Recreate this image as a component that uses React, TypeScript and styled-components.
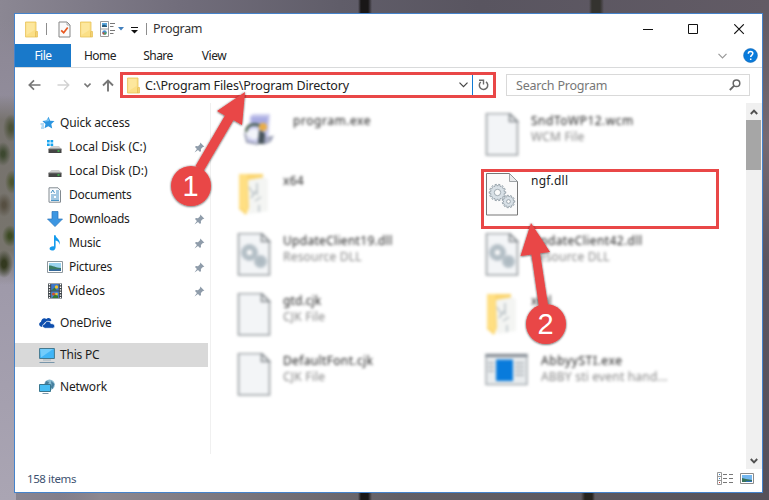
import React from "react";
import styled, { createGlobalStyle, css } from "styled-components";

const GlobalStyle = createGlobalStyle`
  *, *::before, *::after { box-sizing: border-box; }
  html, body { margin: 0; padding: 0; overflow: hidden; }
  body { font-family: "Noto Sans", "Open Sans", sans-serif; font-size: 12px; color: #1c1c1c; }
  svg { display: block; flex: none; }
`;

const RED = "#e94747";

const Desktop = styled.div`
  position: relative;
  width: 769px;
  height: 500px;
  padding: 13px 6px 7px 14px;
  overflow: hidden;
  background:
    linear-gradient(90deg, transparent 358px, #191717 361px, #191717 368px, transparent 372px),
    linear-gradient(90deg, transparent 581px, #25231f 585px, #25231f 592px, transparent 595px) 0 490px no-repeat,
    linear-gradient(90deg, transparent 589px, #34332f 592px, #34332f 600px, transparent 604px) 0 0 / 100% 20px no-repeat,
    radial-gradient(ellipse 8px 14px at 11px 128px, #4b5138 20%, transparent),
    radial-gradient(ellipse 8px 12px at 3px 154px, #3d4830 20%, transparent),
    radial-gradient(ellipse 7px 12px at 12px 182px, #4c5530 20%, transparent),
    radial-gradient(ellipse 8px 12px at 4px 205px, #564f42 20%, transparent),
    radial-gradient(ellipse 8px 11px at 10px 236px, #3c4a23 20%, transparent),
    radial-gradient(ellipse 9px 14px at 4px 264px, #33391f 25%, transparent),
    linear-gradient(180deg, transparent 95px, #77736f 120px, #77746c 250px, transparent 285px) 0 0 / 14px 100% no-repeat,
    linear-gradient(90deg, transparent 60px, #8d8890 100px, #625f65 400px, #56525a 769px) 0 491px no-repeat,
    linear-gradient(180deg, transparent 13px, #696068 60px, #766a72 140px, #5b5560 260px, #55505a 500px) 762px 0 no-repeat,
    linear-gradient(180deg, transparent 20px, #8e8997 60px, #9f9aaa 290px, #aaa5b3 500px) 0 0 / 16px 100% no-repeat,
    linear-gradient(90deg, #8b8793, #716d7b 180px, #605d69 340px, #595560 480px, #625b65 769px);
`;

const Window = styled.div`
  display: flex;
  flex-direction: column;
  width: 749px;
  height: 480px;
  border: 1px solid #4583cb;
  background: #fff;
`;

const TitleBar = styled.header`
  display: flex;
  align-items: center;
  height: 30px;
  padding-left: 10px;
`;
const Divider = styled.i`
  width: 1px;
  height: 12px;
  margin: 0 11px 0 8px;
  background: #8d8d8d;
`;
const WindowTitle = styled.span`
  font-size: 12.5px;
  line-height: 16px;
  letter-spacing: -0.3px;
  color: #333;
  margin-left: -5px;
`;
const Spacer = styled.div`flex: 1;`;
const CaptionButtons = styled.div`
  display: flex;
  gap: 35px;
  padding-right: 17px;
`;

const Ribbon = styled.nav`
  display: flex;
  height: 24px;
  border-bottom: 1px solid #d9dadb;
`;
const Tab = styled.button<{ $active?: boolean; $w: number }>`
  width: ${(p) => p.$w}px;
  height: 23px;
  padding: 0;
  border: 0;
  background: ${(p) => (p.$active ? "#1979ca" : "none")};
  color: ${(p) => (p.$active ? "#fff" : "#222")};
  font: 12px/24px "Noto Sans", sans-serif;
  letter-spacing: -0.5px;
`;
const RibbonTools = styled.div`
  display: flex;
  align-items: center;
  gap: 16px;
  padding-right: 4px;
`;

const NavBar = styled.div`
  display: flex;
  align-items: center;
  height: 34px;
`;
const NavButtons = styled.div`
  display: flex;
  align-items: center;
  width: 105px;
  padding-left: 13px;
`;
const AddressBox = styled.div`
  display: flex;
  align-items: center;
  width: 376px;
  height: 26px;
  padding-left: 4px;
  border: 3px solid ${RED};
  font-size: 12.5px;
  color: #222;
`;
const AddressText = styled.span`
  flex: 1;
  padding-left: 5px;
  letter-spacing: -0.17px;
  white-space: nowrap;
`;
const RefreshBox = styled.div`
  display: grid;
  place-items: center;
  width: 21px;
  height: 20px;
  margin-left: 4px;
  border-left: 1px solid #0f7ad5;
`;
const SearchBox = styled.div`
  display: flex;
  align-items: center;
  justify-content: space-between;
  width: 244px;
  height: 22px;
  margin-left: 10px;
  padding: 0 8px 0 9px;
  border: 1px solid #d9d9d9;
  font-size: 12.5px;
  color: #777;
  letter-spacing: -0.2px;
`;

const Body = styled.div`
  display: flex;
  height: 366px;
  margin-top: 1px;
`;
const Sidebar = styled.aside`
  width: 196px;
  padding: 8px 2px 0 0;
  border-right: 1px solid #f0f0f0;
  height: 351px;
`;
const SideRow = styled.div<{ $level?: number; $gap?: boolean; $selected?: boolean }>`
  display: flex;
  align-items: center;
  height: 24px;
  margin-top: ${(p) => (p.$gap ? 8 : 0)}px;
  padding: 0 3px 0 ${(p) => (p.$level ? 32 : 24)}px;
  background: ${(p) => (p.$selected ? "#d9d9d9" : "none")};
`;
const SideLabel = styled.span<{ $ls?: number; $x?: number }>`
  flex: 1;
  padding-left: ${(p) => p.$x ?? 5}px;
  font-size: 12px;
  line-height: 24px;
  letter-spacing: ${(p) => p.$ls ?? -0.2}px;
  white-space: nowrap;
`;

const FileGrid = styled.main`
  display: grid;
  grid-template-columns: 248px 248px;
  grid-auto-rows: 60px;
  align-content: start;
  flex: 1;
  padding: 6px 0 0 26px;
  height: 366px;
  overflow: hidden;
`;
const FileTile = styled.div<{ $blur?: boolean }>`
  display: flex;
  align-items: flex-start;
  ${(p) => p.$blur && css`filter: blur(1.5px);`}
`;
const FileIcon = styled.div<{ $indent?: number; $top?: number; $w: number }>`
  width: ${(p) => p.$w}px;
  padding: ${(p) => p.$top ?? 4}px 0 0 ${(p) => p.$indent ?? 0}px;
`;
const FileText = styled.div`
  padding-top: 4px;
  font-size: 12px;
  line-height: 16px;
  white-space: nowrap;
`;
const FileName = styled.div<{ $ls?: number }>`
  color: #222;
  letter-spacing: ${(p) => p.$ls ?? 0}px;
`;
const FileKind = styled.div`
  color: #858585;
  letter-spacing: 0.2px;
`;

const ScrollBar = styled.div`
  display: flex;
  flex-direction: column;
  width: 16px;
  background: #f0f0f0;
`;
const ScrollButton = styled.div`
  display: grid;
  place-items: center;
  height: 17px;
`;
const Thumb = styled.div`
  width: 15px;
  height: 50px;
  background: #a6a6a6;
`;

const StatusBar = styled.footer`
  display: flex;
  align-items: center;
  justify-content: space-between;
  height: 23px;
  padding: 0 8px 4px 12px;
  color: #3d5270;
  font-size: 11.5px;
  letter-spacing: -0.4px;
`;
const ViewModes = styled.div`
  display: flex;
  align-items: center;
  gap: 7px;
`;

const Highlight = styled.div`
  position: absolute;
  left: 481px;
  top: 169px;
  width: 238px;
  height: 60px;
  border: 3px solid ${RED};
`;
const Callouts = styled.svg`
  position: absolute;
  left: 0;
  top: 0;
  pointer-events: none;
`;

const SmallFolder = ({ w = 13 }: { w?: number }) => (
  <svg width={w} height="17" viewBox="0 0 13 17" preserveAspectRatio="none">
    <path d="M.5 1h10.500v9.500h1.500V16H.5z" fill="#fbdf86" stroke="#e8c35c" strokeWidth=".8" />
    <path d="M10.800 10.500v5.500" stroke="#dcae3e" strokeWidth=".8" />
    <path d="M1.500 2h8v7l-8 5z" fill="#fde79d" />
  </svg>
);

const CheckedPage = () => (
  <svg width="13" height="17" viewBox="0 0 13 17">
    <path d="M1 1h8l3 3v12H1z" fill="#fafafa" stroke="#858585" />
    <path d="M9 1v3h3" fill="none" stroke="#999" strokeWidth=".8" />
    <path d="M3.200 9.300l2.500 2.500 4-5.300" fill="none" stroke="#e8561e" strokeWidth="1.700" />
  </svg>
);

const PropertiesIcon = () => (
  <svg width="15" height="16" viewBox="0 0 15 16">
    <path d="M.5.5h8v15h-8zM.5 8h8" fill="#fff" stroke="#9b9b9b" />
    <path d="M2 2h5v4H2z" fill="#5aa5dc" />
    <path d="M2 4.500l2-1 3 1.500v1H2z" fill="#275b7b" />
    <circle cx="4.500" cy="11.500" r="2.200" fill="#4c8fd0" />
    <path d="M4.500 11.500h-2.200a2.200 2.200 0 0 0 2.200 2.200z" fill="#c84b32" />
    <path d="M4.500 11.500h2.200a2.200 2.200 0 0 1-2.200 2.200z" fill="#4ba64b" />
    <path d="M10 2.500h5M10 5.500h3.500M10 9.500h5M10 12.500h3.500" stroke="#777" />
  </svg>
);

const PinIcon = () => (
  <svg width="11" height="11" viewBox="0 0 11 11">
    <path d="M6.300.6l4.100 4.100-1.500.4-2 2 .1 2-1 .9-2-2L.5 10.600 2.900 7 1 5.100l.9-1 2.100.1 2-2z" fill="#8f9caa" />
  </svg>
);

const StarIcon = () => (
  <svg width="16" height="14" viewBox="0 0 16 14">
    <path d="M8.500.8l1.700 3.900 4.300.3-3.200 3 .9 4.600-3.900-2.300-3.800 2 1-4.200L2.400 5l4.300-.5z" fill="#2b95e0" />
    <path d="M8.300 2.200L9.400 5l-5 .8z" fill="#73c1f2" />
    <path d="M.5 8h3.500M1.500 10h2.500M1 12h3" stroke="#69b5e8" />
  </svg>
);

const DriveIcon = ({ system }: { system?: boolean }) => (
  <svg width="16" height="16" viewBox="0 0 16 16">
    {system && <path d="M0 1h2.700v2.500H0zM3.500 1h2.700v2.500H3.500zM0 4.400h2.700v2.500H0zM3.500 4.400h2.700v2.500H3.500z" fill="#17a4ef" />}
    <path d="M4.500 7h7.500l2.500 3h-13z" fill="#cfcfcf" />
    <path d="M1.500 10h13v4h-13z" fill="#454545" />
    <path d="M1.500 10h13" stroke="#777" />
    <path d="M10.500 12h2" stroke="#3fe152" strokeWidth="1.200" />
  </svg>
);

const DocumentIcon = () => (
  <svg width="16" height="16" viewBox="0 0 16 16">
    <path d="M2 .8h9l2.500 2.700v11.700H2z" fill="#fafcff" stroke="#828a90" />
    <path d="M4 6l1.800-3L7.500 6M9 4h3M9 6h3M4 8h8M4 10h3M9 10h3M4 12h8M4 13.500h8" stroke="#3487bd" fill="none" strokeWidth=".9" />
  </svg>
);

const DownloadIcon = () => (
  <svg width="16" height="16" viewBox="0 0 16 16">
    <path d="M5 .5h6V8h4.500L8 15.600.5 8H5z" fill="#3c96e2" stroke="#2874ba" strokeWidth=".7" />
  </svg>
);

const MusicIcon = () => (
  <svg width="16" height="16" viewBox="0 0 16 16">
    <path d="M7 .3h1.600c.5 3.400 5.300 4 4 9.400-.5-2.700-1.800-3.700-4-4.300v6.800c0 2-1.600 3.400-3.500 3.400-3.900 0-3.200-4.800 1.900-4.200z" fill="#159bed" />
  </svg>
);

const PictureIcon = () => (
  <svg width="16" height="12" viewBox="0 0 16 12">
    <path d="M.5.5h15v11H.5z" fill="#fff" stroke="#8e989e" />
    <path d="M2 2h12v8H2z" fill="#9bd3ef" />
    <path d="M2 4.500c4 0 6 2 12 2.500v3H2z" fill="#3a7b62" />
    <path d="M2 8.500l12-.5v2H2z" fill="#35699b" />
  </svg>
);

const VideoIcon = () => (
  <svg width="16" height="16" viewBox="0 0 16 16">
    <path d="M1 .5h14v15H1z" fill="#41474c" />
    <path d="M2.500 1v14M13.500 1v14" stroke="#fff" strokeWidth="1.300" strokeDasharray="1.300 1.300" />
    <path d="M4.200 1h7.600v6.500H4.200z" fill="#3e78c9" />
    <path d="M4.200 8.500h7.600V15H4.200z" fill="#4a87d8" />
    <circle cx="9.500" cy="4" r="1.700" fill="#efc32c" />
    <path d="M4.500 7.500l3-3 2 3zM5 15l3-4 3 2v2z" fill="#357a35" />
    <circle cx="6.500" cy="11" r="1.500" fill="#d4502b" />
    <circle cx="9.500" cy="11" r="1.300" fill="#efc32c" />
  </svg>
);

const CloudIcon = () => (
  <svg width="16" height="12" viewBox="0 0 16 12">
    <path d="M3.500 10C-.5 10-.8 5.700 2 5 2.300 1.700 5.200.2 7.300 2c2-2 5-.6 5 2L6 5.500z" fill="#0d4eae" />
    <path d="M6.500 11.300c-4 0-3.600-4.300-.8-4.300.5-3.400 5.500-3.600 6.200-.4 4.800-.2 4.800 4.700 1.600 4.700z" fill="#0d4eae" stroke="#fff" strokeWidth=".8" />
  </svg>
);

const PcIcon = () => (
  <svg width="16" height="16" viewBox="0 0 16 16">
    <path d="M.6 1.500h14.800v10H.6z" fill="#40b5f6" stroke="#43788e" />
    <path d="M1.200 2h13L2 10.500z" fill="#72ccfb" />
    <path d="M4 13h8" stroke="#9fb4c0" />
    <path d="M.5 15.500h15" stroke="#7996aa" />
  </svg>
);

const NetworkIcon = () => (
  <svg width="16" height="16" viewBox="0 0 16 16">
    <circle cx="10.500" cy="5.800" r="5.300" fill="#88bad0" />
    <path d="M7 2l3 1-1 3H5.500zM12 2l3.500 3-2 5-2-2 1-2z" fill="#457f9e" />
    <path d="M.5 5.500h11v7H.5z" fill="#46bdf4" stroke="#39768e" />
    <path d="M3.500 14.500h6" stroke="#7996aa" />
  </svg>
);

const gear = (teeth: number, outer: number, inner: number) => {
  const points: string[] = [];
  for (let i = 0; i < teeth; i++) {
    [[-0.3, inner], [-0.2, outer], [0.2, outer], [0.3, inner]].forEach(([o, r]) => {
      const a = ((i + o) / teeth) * Math.PI * 2;
      points.push(`${(Math.cos(a) * r).toFixed(2)},${(Math.sin(a) * r).toFixed(2)}`);
    });
  }
  return points.join(" ");
};

const PageIcon = ({ gears, soft }: { gears?: boolean; soft?: boolean }) => (
  <svg width="34" height="44" viewBox="0 0 34 44">
    <path d="M1.500 .5h23l8 8v33.500h-31z" fill={soft ? "#f3f5f7" : "#fbfbfb"} stroke={soft ? "#999ea2" : "#777"} strokeWidth={soft ? 1.600 : 1} />
    <path d="M24.500 .5v8h8z" fill="#e8eaec" stroke="#8a8f93" strokeWidth={soft ? 1.600 : 0.800} />
    {gears && (
      <g fill={soft ? "#b3bfc6" : "#d8e0e6"} stroke={soft ? "#a8b4bc" : "#8d99a2"} strokeWidth=".8">
        <polygon points={gear(14, 8.3, 6.8)} transform="translate(12.500 19.500)" />
        <polygon points={gear(11, 6.3, 5)} transform="translate(23.500 28.500)" />
        <circle cx="12.500" cy="19.500" r="3.200" fill="#fbfbfb" />
        <circle cx="23.500" cy="28.500" r="1.900" fill={soft ? "#aebbc2" : "#fbfbfb"} />
      </g>
    )}
  </svg>
);

const OpenFolderIcon = () => (
  <svg width="34" height="44" viewBox="0 0 34 44">
    <path d="M2 1h24v4l-14 3v27l-3 7-7-6z" fill="#fbd671" />
    <path d="M11 7l17-3 3 3v31l-19 3z" fill="#f4f5f3" />
    <path d="M12 14l5 8M14 25l5-7M20 10v12M18 28l6-4M22 32v7" stroke="#b4bdc2" strokeWidth="1.400" />
    <path d="M2 1h8v38l-8-5z" fill="#ffdf83" />
  </svg>
);

const ProgramIcon = () => (
  <svg width="32" height="34" viewBox="0 0 32 34">
    <path d="M7 3l3-2h17l-2 28H5z" fill="#c9caed" />
    <path d="M8 4h17l-1 7H9z" fill="#a8abe2" />
    <path d="M3 19c1-10 13-9 17-3" fill="none" stroke="#3f5746" strokeWidth="2.500" />
    <circle cx="11" cy="21" r="5.500" fill="#f2f4fa" />
    <circle cx="20" cy="14" r="4" fill="#e9ad48" />
    <path d="M16 17l6 3v11h-7z" fill="#48545c" />
    <path d="M2 20l2 9 11 2M22 26l7-2-2 4-5 2z" fill="none" stroke="#9297af" strokeWidth="2" />
  </svg>
);

const AppWindowIcon = () => (
  <svg width="44" height="34" viewBox="0 0 44 34">
    <path d="M1 1.500h41v30H1z" fill="#e9ecee" stroke="#a5abb0" strokeWidth="1.500" />
    <path d="M.5 1h42v3H.5z" fill="#858c94" />
    <path d="M3 10h6M3 14h6M3 18h6M30 10h9M30 14h9M30 18h9M30 22h9" stroke="#b8bdc1" strokeWidth="2" />
    <path d="M11 6.500h17V28H11z" fill="#087bdc" />
  </svg>
);

type FileEntry = {
  name: string;
  kind?: string;
  icon: React.ReactNode;
  ls?: number;
  indent?: number;
  top?: number;
  textX?: number;
  sharp?: boolean;
};

const files: FileEntry[] = [
  { name: "program.exe", icon: <ProgramIcon />, indent: 6, top: 4, textX: 56, ls: 0.55 },
  { name: "SndToWP12.wcm", kind: "WCM File", icon: <PageIcon soft />, ls: 0.5 },
  { name: "x64", icon: <OpenFolderIcon />, ls: 0.3 },
  { name: "ngf.dll", icon: <PageIcon gears />, sharp: true, ls: 0.25 },
  { name: "UpdateClient19.dll", kind: "Resource DLL", icon: <PageIcon soft gears />, ls: 0.3 },
  { name: "UpdateClient42.dll", kind: "Resource DLL", icon: <PageIcon soft gears />, ls: 0.4 },
  { name: "gtd.cjk", kind: "CJK File", icon: <PageIcon soft />, ls: 0.1 },
  { name: "xml", icon: <OpenFolderIcon /> },
  { name: "DefaultFont.cjk", kind: "CJK File", icon: <PageIcon soft />, ls: 0.35 },
  { name: "AbbyySTI.exe", kind: "ABBY sti event hand...", icon: <AppWindowIcon />, textX: 56, ls: 0.6 },
];

const places = [
  { label: "Local Disk (C:)", icon: <DriveIcon system />, x: 6, ls: 0 },
  { label: "Local Disk (D:)", icon: <DriveIcon />, x: 6, ls: 0 },
  { label: "Documents", icon: <DocumentIcon />, x: 6, ls: -0.25 },
  { label: "Downloads", icon: <DownloadIcon />, x: 6, ls: -0.25 },
  { label: "Music", icon: <MusicIcon />, x: 6, ls: -0.2 },
  { label: "Pictures", icon: <PictureIcon />, x: 6, ls: -0.25 },
  { label: "Videos", icon: <VideoIcon />, x: 5, ls: -0.1 },
];

const NavGlyphs = styled(NavButtons)`
  svg + svg { margin-left: 16px; }
  svg:nth-child(3) { margin-left: 14px; }
  svg:nth-child(4) { margin-left: 11px; }
`;

const QuickTools = styled.div`
  display: flex;
  align-items: center;
`;
const Gap = styled.i<{ $w: number }>`width: ${(p) => p.$w}px;`;

export default function App() {
  return (
    <>
      <GlobalStyle />
      <Desktop>
        <Window>
          <TitleBar>
            <QuickTools>
              <SmallFolder />
              <Divider />
              <CheckedPage />
              <Gap $w={9} />
              <SmallFolder />
              <Gap $w={7} />
              <PropertiesIcon />
              <Gap $w={3} />
              <svg width="6" height="4" viewBox="0 0 6 4"><path d="M0 0h6L3 3.500z" fill="#4380bd" /></svg>
              <Gap $w={7} />
              <svg width="7" height="10" viewBox="0 0 7 10"><path d="M0 3.500h7" stroke="#111" /><path d="M0 6h7L3.500 9.500z" fill="#111" /></svg>
              <Divider />
            </QuickTools>
            <WindowTitle>Program</WindowTitle>
            <Spacer />
            <CaptionButtons>
              <svg width="11" height="11" viewBox="0 0 11 11"><path d="M1 5.500h10" stroke="#111" /></svg>
              <svg width="11" height="11" viewBox="0 0 11 11"><path d="M.5.5h9v9h-9z" fill="none" stroke="#111" /></svg>
              <svg width="11" height="11" viewBox="0 0 11 11"><path d="M.3.3l9.500 9.500M9.800 .3L.3 9.800" stroke="#111" strokeWidth="1.100" /></svg>
            </CaptionButtons>
          </TitleBar>
          <Ribbon>
            <Tab $active $w={56}>File</Tab>
            <Tab $w={58}>Home</Tab>
            <Tab $w={58}>Share</Tab>
            <Tab $w={54}>View</Tab>
            <Spacer />
            <RibbonTools>
              <svg width="9" height="6" viewBox="0 0 9 6"><path d="M.5.8l4 4 4-4" fill="none" stroke="#999" strokeWidth="1.200" /></svg>
              <svg width="15" height="15" viewBox="0 0 15 15">
                <circle cx="7.500" cy="7.500" r="6.900" fill="#087bdc" stroke="#1768b2" strokeWidth=".6" />
                <path d="M5.300 5.700c0-3 4.500-2.800 4.500-.2 0 1.600-2.100 1.700-2.100 3.500M7.700 10.500v1.500" fill="none" stroke="#fff" strokeWidth="1.500" />
              </svg>
            </RibbonTools>
          </Ribbon>
          <NavBar>
            <NavGlyphs>
              <svg width="13" height="12" viewBox="0 0 13 12"><path d="M12.500 6H1.500M6 1.300L1.300 6 6 10.700" fill="none" stroke="#777" strokeWidth="1.700" /></svg>
              <svg width="13" height="12" viewBox="0 0 13 12"><path d="M.5 6h11M7 1.300L11.700 6 7 10.700" fill="none" stroke="#d2d2d2" strokeWidth="1.500" /></svg>
              <svg width="7" height="5" viewBox="0 0 7 5"><path d="M.5.6l3 3 3-3" fill="none" stroke="#777" strokeWidth="1.500" /></svg>
              <svg width="12" height="13" viewBox="0 0 12 13"><path d="M6 12.500V1.500M1 6.500l5-5 5 5" fill="none" stroke="#777" strokeWidth="1.900" /></svg>
            </NavGlyphs>
            <AddressBox>
              <SmallFolder />
              <AddressText>C:\Program Files\Program Directory</AddressText>
              <svg width="9" height="6" viewBox="0 0 9 6"><path d="M.5.6l4 4 4-4" fill="none" stroke="#444" strokeWidth="1.200" /></svg>
              <RefreshBox>
                <svg width="11" height="12" viewBox="0 0 11 12">
                  <path d="M8 2.800a4.200 4.200 0 1 1-5.200.2" fill="none" stroke="#6b6b6b" strokeWidth="1.500" />
                  <path d="M1 1.200h4.500v4.300" fill="none" stroke="#6b6b6b" strokeWidth="1.400" />
                </svg>
              </RefreshBox>
            </AddressBox>
            <SearchBox>
              <span>Search Program</span>
              <svg width="12" height="12" viewBox="0 0 12 12"><circle cx="7.500" cy="4.300" r="3.300" fill="none" stroke="#666" strokeWidth="1.500" /><path d="M5 6.800L.8 11" stroke="#666" strokeWidth="1.800" /></svg>
            </SearchBox>
          </NavBar>
          <Body>
            <Sidebar>
              <SideRow><Gap $w={1} /><StarIcon /><SideLabel $x={4} $ls={-0.15}>Quick access</SideLabel></SideRow>
              {places.map((p) => (
                <SideRow key={p.label} $level={1}>
                  {p.icon}
                  <SideLabel $x={p.x} $ls={p.ls}>{p.label}</SideLabel>
                  <PinIcon />
                </SideRow>
              ))}
              <SideRow $gap><CloudIcon /><SideLabel>OneDrive</SideLabel></SideRow>
              <SideRow $gap $selected><PcIcon /><SideLabel>This PC</SideLabel></SideRow>
              <SideRow $gap><NetworkIcon /><SideLabel>Network</SideLabel></SideRow>
            </Sidebar>
            <FileGrid>
              {files.map((f) => (
                <FileTile key={f.name} $blur={!f.sharp}>
                  <FileIcon $w={f.textX ?? 46} $indent={f.indent} $top={f.top}>{f.icon}</FileIcon>
                  <FileText>
                    <FileName $ls={f.ls}>{f.name}</FileName>
                    {f.kind && <FileKind>{f.kind}</FileKind>}
                  </FileText>
                </FileTile>
              ))}
            </FileGrid>
            <ScrollBar>
              <ScrollButton><svg width="8" height="6" viewBox="0 0 8 6"><path d="M.8 5L4 1.600 7.200 5" fill="none" stroke="#505050" strokeWidth="1.900" /></svg></ScrollButton>
              <Thumb />
              <Spacer />
              <ScrollButton><svg width="8" height="6" viewBox="0 0 8 6"><path d="M.8 1L4 4.400 7.200 1" fill="none" stroke="#505050" strokeWidth="1.900" /></svg></ScrollButton>
            </ScrollBar>
          </Body>
          <StatusBar>
            <span>158 items</span>
            <ViewModes>
              <svg width="16" height="13" viewBox="0 0 16 13">
                <path d="M.5.5h4v12h-4zM.5 4.500h4M.5 8.500h4" fill="#fff" stroke="#999" />
                <path d="M2 2.500h1M2 6.500h1" stroke="#3d83bf" /><path d="M2 10.500h1" stroke="#c4362d" />
                <path d="M6 2.500h4M12 2.500h4M6 6.500h4M12 6.500h4M6 10.500h4M12 10.500h4" stroke="#777" />
              </svg>
              <svg width="14" height="11" viewBox="0 0 14 11">
                <path d="M.5.500h13v10H.5z" fill="#fff" stroke="#8b8b8b" />
                <path d="M2 2h10v7H2z" fill="#74b7ef" /><path d="M2 5l4 1 6 1v2H2z" fill="#38735d" /><path d="M6 8h6v1H6z" fill="#2d70ba" />
              </svg>
            </ViewModes>
          </StatusBar>
        </Window>
        <Highlight />
        <Callouts width="769" height="500" viewBox="0 0 769 500">
          <defs>
            <filter id="shade" x="-20%" y="-20%" width="140%" height="140%">
              <feDropShadow dx="0" dy="0.500" stdDeviation="1.300" floodColor="#000" floodOpacity="0.75" />
            </filter>
          </defs>
          <g fill={RED} filter="url(#shade)">
            <path d="M245 92l-3 33-8.500-5-30 51-8-5 29.500-50.500-8-4.500z" />
            <circle cx="191" cy="186" r="20" />
            <path d="M531 223l19 29-10 1.200 8 52-9 1.500-7.500-52.200-11 1.500z" />
            <circle cx="546" cy="324" r="20" />
          </g>
          <g fill="#fff" fontFamily="Liberation Sans, Arial, sans-serif" fontSize="29" textAnchor="middle">
            <text x="190.500" y="195.500">1</text>
            <text x="545.500" y="334">2</text>
          </g>
        </Callouts>
      </Desktop>
    </>
  );
}
